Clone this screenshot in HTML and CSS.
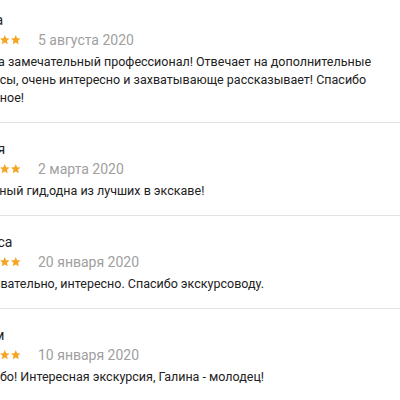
FILE: index.html
```html
<!DOCTYPE html>
<html lang="ru">
<head>
<meta charset="utf-8">
<link rel="stylesheet" href="styles.css">
</head>
<body>
<div class="reviews">
  <div class="review">
    <div class="name">Елена</div>
    <div class="meta">
      <span class="stars">
        <svg viewBox="0 0 24 24"><path d="M12 2l2.9 6.9 7.1.6-5.4 4.7 1.6 7-6.2-3.7-6.2 3.7 1.6-7L2 9.5l7.1-.6z"/></svg>
        <svg viewBox="0 0 24 24"><path d="M12 2l2.9 6.9 7.1.6-5.4 4.7 1.6 7-6.2-3.7-6.2 3.7 1.6-7L2 9.5l7.1-.6z"/></svg>
        <svg viewBox="0 0 24 24"><path d="M12 2l2.9 6.9 7.1.6-5.4 4.7 1.6 7-6.2-3.7-6.2 3.7 1.6-7L2 9.5l7.1-.6z"/></svg>
        <svg viewBox="0 0 24 24"><path d="M12 2l2.9 6.9 7.1.6-5.4 4.7 1.6 7-6.2-3.7-6.2 3.7 1.6-7L2 9.5l7.1-.6z"/></svg>
        <svg viewBox="0 0 24 24"><path d="M12 2l2.9 6.9 7.1.6-5.4 4.7 1.6 7-6.2-3.7-6.2 3.7 1.6-7L2 9.5l7.1-.6z"/></svg>
      </span>
      <span class="date">5 августа 2020</span>
    </div>
    <div class="text">Галина замечательный профессионал! Отвечает на дополнительные вопросы, очень интересно и захватывающе рассказывает! Спасибо огромное!</div>
  </div>
  <div class="review">
    <div class="name">Дарья</div>
    <div class="meta">
      <span class="stars">
        <svg viewBox="0 0 24 24"><path d="M12 2l2.9 6.9 7.1.6-5.4 4.7 1.6 7-6.2-3.7-6.2 3.7 1.6-7L2 9.5l7.1-.6z"/></svg>
        <svg viewBox="0 0 24 24"><path d="M12 2l2.9 6.9 7.1.6-5.4 4.7 1.6 7-6.2-3.7-6.2 3.7 1.6-7L2 9.5l7.1-.6z"/></svg>
        <svg viewBox="0 0 24 24"><path d="M12 2l2.9 6.9 7.1.6-5.4 4.7 1.6 7-6.2-3.7-6.2 3.7 1.6-7L2 9.5l7.1-.6z"/></svg>
        <svg viewBox="0 0 24 24"><path d="M12 2l2.9 6.9 7.1.6-5.4 4.7 1.6 7-6.2-3.7-6.2 3.7 1.6-7L2 9.5l7.1-.6z"/></svg>
        <svg viewBox="0 0 24 24"><path d="M12 2l2.9 6.9 7.1.6-5.4 4.7 1.6 7-6.2-3.7-6.2 3.7 1.6-7L2 9.5l7.1-.6z"/></svg>
      </span>
      <span class="date">2 марта 2020</span>
    </div>
    <div class="text">Отличный гид,одна из лучших в экскаве!</div>
  </div>
  <div class="review">
    <div class="name">Лариса</div>
    <div class="meta">
      <span class="stars">
        <svg viewBox="0 0 24 24"><path d="M12 2l2.9 6.9 7.1.6-5.4 4.7 1.6 7-6.2-3.7-6.2 3.7 1.6-7L2 9.5l7.1-.6z"/></svg>
        <svg viewBox="0 0 24 24"><path d="M12 2l2.9 6.9 7.1.6-5.4 4.7 1.6 7-6.2-3.7-6.2 3.7 1.6-7L2 9.5l7.1-.6z"/></svg>
        <svg viewBox="0 0 24 24"><path d="M12 2l2.9 6.9 7.1.6-5.4 4.7 1.6 7-6.2-3.7-6.2 3.7 1.6-7L2 9.5l7.1-.6z"/></svg>
        <svg viewBox="0 0 24 24"><path d="M12 2l2.9 6.9 7.1.6-5.4 4.7 1.6 7-6.2-3.7-6.2 3.7 1.6-7L2 9.5l7.1-.6z"/></svg>
        <svg viewBox="0 0 24 24"><path d="M12 2l2.9 6.9 7.1.6-5.4 4.7 1.6 7-6.2-3.7-6.2 3.7 1.6-7L2 9.5l7.1-.6z"/></svg>
      </span>
      <span class="date">20 января 2020</span>
    </div>
    <div class="text">Познавательно, интересно. Спасибо экскурсоводу.</div>
  </div>
  <div class="review">
    <div class="name">Артём</div>
    <div class="meta">
      <span class="stars">
        <svg viewBox="0 0 24 24"><path d="M12 2l2.9 6.9 7.1.6-5.4 4.7 1.6 7-6.2-3.7-6.2 3.7 1.6-7L2 9.5l7.1-.6z"/></svg>
        <svg viewBox="0 0 24 24"><path d="M12 2l2.9 6.9 7.1.6-5.4 4.7 1.6 7-6.2-3.7-6.2 3.7 1.6-7L2 9.5l7.1-.6z"/></svg>
        <svg viewBox="0 0 24 24"><path d="M12 2l2.9 6.9 7.1.6-5.4 4.7 1.6 7-6.2-3.7-6.2 3.7 1.6-7L2 9.5l7.1-.6z"/></svg>
        <svg viewBox="0 0 24 24"><path d="M12 2l2.9 6.9 7.1.6-5.4 4.7 1.6 7-6.2-3.7-6.2 3.7 1.6-7L2 9.5l7.1-.6z"/></svg>
        <svg viewBox="0 0 24 24"><path d="M12 2l2.9 6.9 7.1.6-5.4 4.7 1.6 7-6.2-3.7-6.2 3.7 1.6-7L2 9.5l7.1-.6z"/></svg>
      </span>
      <span class="date">10 января 2020</span>
    </div>
    <div class="text">Спасибо! Интересная экскурсия, Галина - молодец!</div>
  </div>
</div>
</body>
</html>
```
FILE: styles.css
```css
html, body {
  margin: 0;
  padding: 0;
  background: #ffffff;
  overflow: hidden;
}
body {
  width: 400px;
  height: 400px;
  font-family: Roboto, "Noto Sans", sans-serif;
  color: #222222;
}
.reviews {
  margin-top: -6px;
  margin-left: -36px;
  width: 436px;
}
.review {
  padding: 18px 0 15px 0;
  border-bottom: 1px solid #e2e2e2;
}
.name {
  font-size: 14px;
  line-height: 16px;
  font-weight: 400;
  color: #222222;
}
.meta {
  margin-top: 4px;
  height: 16px;
  display: flex;
  align-items: center;
}
.stars {
  display: flex;
  fill: #f4a522;
}
.stars svg {
  width: 11.5px;
  height: 11.5px;
}
.date {
  margin-left: 16.5px;
  font-size: 14px;
  color: #a0a0a0;
}
.text {
  margin-top: 5px;
  font-size: 12.5px;
  line-height: 18px;
  color: #222222;
}
```
